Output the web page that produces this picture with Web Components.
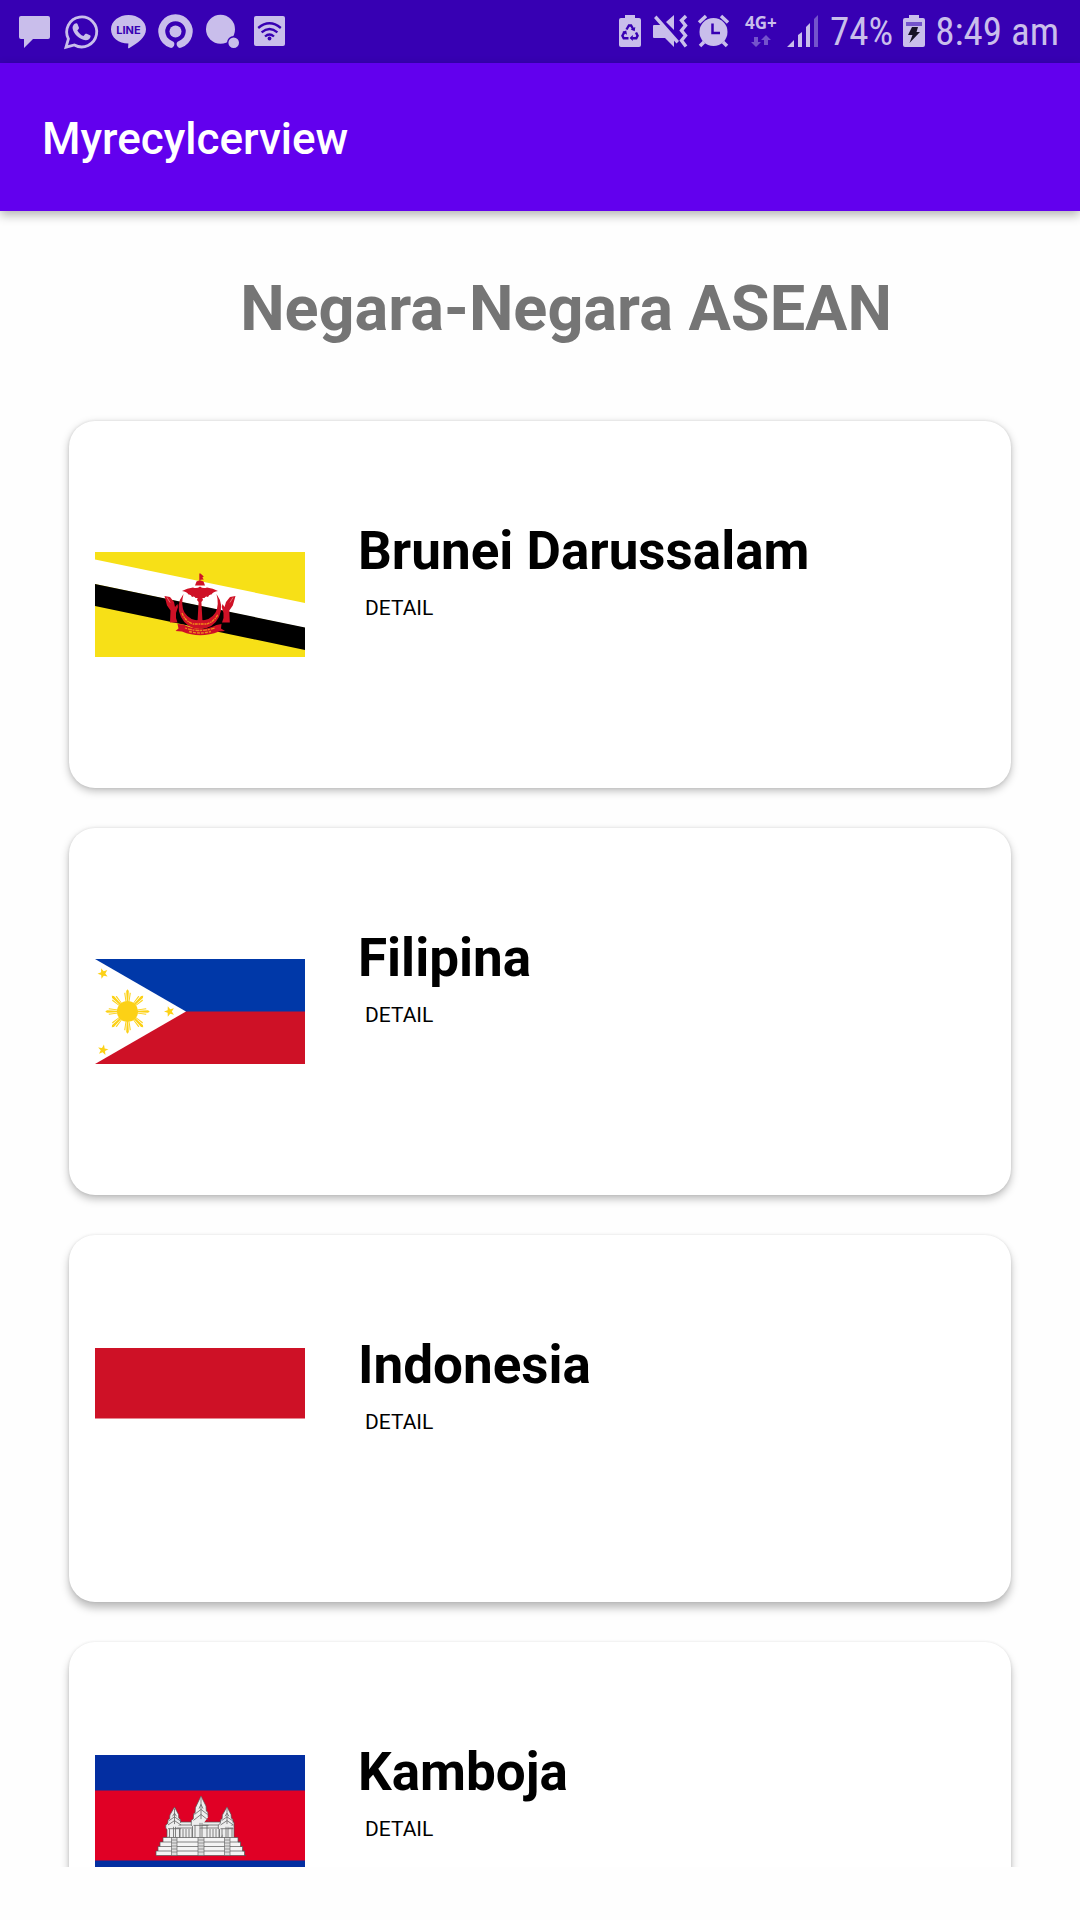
<!DOCTYPE html>
<html lang="id">
<head>
<meta charset="utf-8">
<meta name="viewport" content="width=device-width, initial-scale=1">
<title>Myrecylcerview</title>
<style>
  body { margin: 0; background: #fefefe; font-family: Roboto, "Noto Sans", sans-serif; }
</style>
</head>
<body>
<asean-app>
  <status-bar slot="status"></status-bar>
  <app-bar slot="bar">Myrecylcerview</app-bar>
  <country-list>
    <span slot="title">Negara-Negara ASEAN</span>
    <country-card flag="brunei" style="--drop: 3px">Brunei Darussalam</country-card>
    <country-card flag="filipina" style="--drop: 4px">Filipina</country-card>
    <country-card flag="indonesia" style="--drop: 6px">Indonesia</country-card>
    <country-card flag="kamboja" style="--drop: 7px">Kamboja</country-card>
  </country-list>
</asean-app>

<script>
const define = (name, html) => {
  const template = document.createElement('template');
  template.innerHTML = html;
  customElements.define(name, class extends HTMLElement {
    constructor() {
      super();
      this.attachShadow({ mode: 'open' }).append(template.content.cloneNode(true));
    }
  });
};

define('asean-app', `
<style>
  :host { display: flex; flex-direction: column; height: 100vh; }
</style>
<slot name="status"></slot>
<slot name="bar"></slot>
<slot></slot>`);

define('status-bar', `
<style>
  :host { display: block; flex: none; background: #3700b3; color: #c9beeb; }
  .bar { display: flex; justify-content: space-between; align-items: center; height: 62px; padding: 0 21px 1px 17px; }
  .group { display: flex; align-items: center; gap: 12px; }
  .system { gap: 10px; }
  svg { display: block; fill: currentColor; overflow: visible; }
  .text { padding-top: 2px; font: 39px/44px "Roboto Condensed", "Liberation Sans Narrow", Roboto, sans-serif; white-space: nowrap; }
  .net { font: bold 17px "Open Sans", sans-serif; }
  .line { font: bold 11px Inter, sans-serif; fill: #3700b3; }
  .dim { fill: #7453cc; }
</style>
<div class="bar">
  <div class="group">
    <svg width="35" height="35" viewBox="0 0 35 35"><path d="M4 2h27q2 0 2 2v19q0 2-2 2H16l-9 9v-9H4q-2 0-2-2V4q0-2 2-2z"/></svg>
    <svg width="35" height="35" viewBox="0 0 35 35"><path fill="none" stroke="currentColor" stroke-width="2.8" d="M2 33.2l2.4-8.4A15 15 0 1 1 10.4 31z"/><path d="M12.200 9.300c.6-.1 1 .1 1.300.8l1.400 3.300c.2.600.1 1-.3 1.500l-1.300 1.500c1.500 2.700 3.400 4.400 6.200 5.700l1.700-2c.5-.5.9-.6 1.500-.3l3.200 1.500c.7.300.8.700.7 1.300-.4 2.400-2.500 3.800-4.900 3.700-6.600-.7-12.400-6.700-13.100-12-.1-2.200 1.400-4.800 3.600-5z"/></svg>
    <svg width="35" height="35" viewBox="0 0 35 35"><path d="M17.500 1C27 1 35 7.200 35 15.200c0 8.300-8.500 14-17 19-.8.300-1-.3-.9-1l.3-3.600C7.500 29.600 0 23.500 0 15.200 0 7.200 8 1 17.500 1z"/><text class="line" x="17.500" y="20" text-anchor="middle">LINE</text></svg>
    <svg width="35" height="35" viewBox="0 0 35 35"><path fill="none" stroke="currentColor" stroke-width="7" stroke-linecap="round" d="M12.800 30.300A13.700 13.700 0 1 1 22.200 30.300"/><circle cx="17.500" cy="17.500" r="6"/></svg>
    <svg width="35" height="35" viewBox="0 0 35 35"><circle cx="15.500" cy="15.200" r="14.500"/><circle cx="28.700" cy="28.700" r="6" stroke="#3700b3" stroke-width="1.400"/></svg>
    <svg width="35" height="35" viewBox="0 0 35 35"><rect x="2" y="2" width="31" height="30" rx="2"/><g fill="none" stroke="#3700b3" stroke-width="2.300"><path d="M6.200 14Q17.500 4.500 28.800 14M9.600 18.400q7.900-6.800 15.800 0M13 22.500q4.500-4 9 0"/></g><circle cx="17.500" cy="24.500" r="1.900" fill="#3700b3"/></svg>
  </div>
  <div class="group system">
    <svg width="22" height="32" viewBox="0 0 22 32"><path d="M2 3h4V0h10v3h4q2 0 2 2v25q0 2-2 2H2q-2 0-2-2V5q0-2 2-2z"/><g fill="none" stroke="#3700b3" stroke-width="2.400"><path d="M7.500 14.500l2.400-4h2.200l2.300 4M17 17.500l1.600 3.200-1.300 2.600h-4M9.500 23.300H4.700l-1.300-2.600 2.300-4"/></g><path fill="#3700b3" d="M16.300 12l-.6 4.300-4-1.800zM13.800 20v6l-3.200-3zM3.200 17l4-1.500.8 4.200z"/></svg>
    <svg width="37" height="32" viewBox="-2 0 37 32"><path d="M1 10h7l13 13v9l-9-9H1q-1 0-1-1V11q0-1 1-1zM13 7l8-7v15zM1 3l2.500-2.500L26 26l-2.500 2.500z"/><path fill="none" stroke="currentColor" stroke-width="3.400" d="M33 1l-4.500 4.500 4 5-4 5 4 5-4 5 4.500 6"/></svg>
    <svg width="32" height="32" viewBox="0 0 32 32"><circle cx="15.500" cy="17" r="14"/><path fill="none" stroke="currentColor" stroke-width="3.500" d="M1 7.500L8 1M23 1l7 6.500M6 27l-4 4M25 27l4 4"/><path fill="none" stroke="#3700b3" stroke-width="2.500" d="M14.500 8.500V18H22"/></svg>
    <svg width="37" height="32" viewBox="0 0 37 32"><text class="net" x="5" y="14">4G+</text><path class="dim" d="M14 22h4v5h3l-5 5-5-5h3zM24 30h4v-5h3l-5-5-5 5h3z"/></svg>
    <svg width="33" height="32" viewBox="0 0 33 32"><path d="M0 32l7-7v7zM11 20l4-3v15h-4zM19 12l4-4v24h-4z"/><path class="dim" d="M27 4l4-4v32h-4z"/></svg>
    <span class="text">74%</span>
    <svg width="22" height="32" viewBox="0 0 22 32"><path d="M2 3h4V0h10v3h4q2 0 2 2v25q0 2-2 2H2q-2 0-2-2V5q0-2 2-2z"/><path class="dim" d="M3 7h16v4H3z"/><path fill="#171127" d="M9 12h6l-1.500 5H17L6.500 28l3-8H5z"/></svg>
    <span class="text">8:49 am</span>
  </div>
</div>`);

define('app-bar', `
<style>
  :host { display: block; flex: none; position: relative; z-index: 1; background: #6200ee; color: #fff; box-shadow: 0 4px 10px rgba(0,0,0,.3); }
  header { display: flex; align-items: center; height: 148px; padding: 3px 42px 0; box-sizing: border-box; }
  h1 { margin: 0; font-size: 44px; line-height: 56px; font-weight: 500; }
</style>
<header><h1><slot></slot></h1></header>`);

define('country-list', `
<style>
  :host { display: flex; flex-direction: column; flex: 1; min-height: 0; padding-bottom: 53px; }
  h2 { margin: 0; padding: 61px 0 0 52px; text-align: center; font-size: 63px; line-height: 74px; font-weight: 700; color: #757575; }
  .scroll { display: flex; flex-direction: column; gap: 40px; flex: 1; min-height: 0; margin-top: 45px; padding: 30px 69px 0; overflow-y: auto; scrollbar-width: none; }
</style>
<h2><slot name="title"></slot></h2>
<div class="scroll"><slot></slot></div>`);

define('country-card', `
<style>
  :host { display: block; flex: none; }
  article { display: flex; align-items: center; gap: 53px; height: 367px; box-sizing: border-box; padding: 0 26px; background: #fff; border-radius: 26px; box-shadow: 0 var(--drop, 4px) 9px rgba(0,0,0,.26), 0 0 3px rgba(0,0,0,.1); }
  flag-image { flex: none; width: 210px; }
  .info { display: flex; flex-direction: column; align-items: flex-start; align-self: flex-start; padding-top: 99px; }
  h3 { margin: 0; font-size: 53px; line-height: 62px; font-weight: 700; color: #000; }
  button { margin: 0; padding: 13px 7px; border: 0; background: none; font: 21px/26px Roboto, sans-serif; color: #000; }
</style>
<article>
  <flag-image></flag-image>
  <div class="info">
    <h3><slot></slot></h3>
    <button type="button">DETAIL</button>
  </div>
</article>`);

const star = (x, y, r, turn) => {
  const pts = [];
  for (let i = 0; i < 10; i++) {
    const a = (turn + i * 36) * Math.PI / 180, d = i % 2 ? r * 0.42 : r;
    pts.push((x + d * Math.sin(a)).toFixed(2) + ',' + (y - d * Math.cos(a)).toFixed(2));
  }
  return `<polygon points="${pts.join(' ')}"/>`;
};

const rays = Array.from({ length: 8 }, (_, i) =>
  `<path transform="rotate(${i * 45})" d="M-.8-10L-1.300-20.500 0-22.200 1.300-20.500.8-10zM-2-10L-3.300-18.500-2.200-19-1.200-10zM2-10L3.300-18.500 2.200-19 1.200-10z"/>`).join('');

// One tower of the temple, drawn around x = 0 with its foot at y = 0.
const tower = (x, y, h, w) => `
  <g transform="translate(${x} ${y})">
    <path fill="#eee" stroke="#555" stroke-width=".7" d="M${-w} 0V${-h * .28}l-1.200-1V${-h * .42}l2-1.500.3-${h * .12} 1.500-1 .3-${h * .12}L0 ${-h}L${w - 3.500} ${-h * .76}l.3 ${h * .12} 1.500 1 .3 ${h * .12}2 1.500V${-h * .28}L${w} ${-h * .26}V0z"/>
    <path fill="none" stroke="#666" stroke-width=".8" d="M${-w + 1} ${-h * .3}H${w - 1}M${-w + 1} ${-h * .42}L0 ${-h * .56}L${w - 1} ${-h * .42}M${-w + 2} ${-h * .56}L0 ${-h * .68}L${w - 2} ${-h * .56}M-2 ${-h * .7}L0 ${-h * .8}L2 ${-h * .7}M${-w + 2.500} 0V${-h * .3}M${w - 2.500} 0V${-h * .3}M-1 0V${-h * .36}M1 0V${-h * .36}M0 ${-h * .45}V${-h * .95}"/>
  </g>`;

const flags = {
  brunei: ['Bendera Brunei Darussalam', 105, `
    <rect width="210" height="105" fill="#f7e017"/>
    <path fill="#fff" d="M0 7.500L210 51v25L0 32z"/>
    <path d="M0 32l210 43.500V98L0 54z"/>
    <g fill="#cf1126">
      <path d="M104.300 21.500h1.200l3.300 3-1.500 1 1.500 2-3.300.2v2.300h-1.200zM101.500 29.500q3.500-2 7 0l1.500 4h-10z"/>
      <path d="M105 34.500Q108 37 112 35.500Q118 36 123 39Q118 39.500 116.500 42.500Q114 42 113 45Q110.500 43.500 109.500 46H100.500Q99.500 43.500 97 45Q96 42 93.500 42.500Q92 39.500 87 39Q92 36 98 35.500Q102 37 105 34.500z"/>
      <path d="M103 45h4l1 3-1.600 2 1 18 3 4h-10.800l3-4 1-18-1.600-2z"/>
      <path d="M88.500 42Q80 53 86 65q6 12 19 12t19-12q5.500-12-2.500-23 3 11-1 18.500-5 8-15.500 8t-15.500-8q-4-7.500-1-18.500z"/>
      <path d="M69.500 44l5.500 1 4 5 1 5 2.500-3 .5 3-2 6v5l1.500 4.500h-7.500l.5-12-3.500-5zM140.500 44l-5.500 1-4 5-1.500 5-2-3-.8 3 1.800 6v5l-1.500 4.500h7.800l-.5-12 3.500-5z"/>
      <path d="M80.500 79l3-2.500-1-4.500 6 .5Q105 81 121.500 73l5-1-.5 4.500 4 2.500-6 .5Q105 87 87 79.500z"/>
    </g>
    <g fill="none" stroke="#f08a1a" stroke-width="1.300">
      <path stroke-dasharray="3 .8 1.500 .6" d="M87 61q3 8 11 11h14q8-3 11-10"/>
      <path stroke-dasharray="2 1 4 .7" d="M90 76q15 5 30 0"/>
      <path stroke-dasharray="3 1" d="M94 79.500q11 3 22 0"/>
    </g>
    <path fill="none" stroke="#f5b3a8" stroke-width=".6" d="M72 45.500l3 5M138 45.500l-3 5"/>`],
  filipina: ['Bendera Filipina', 105, `
    <rect width="210" height="53" fill="#0038a8"/>
    <rect y="52.500" width="210" height="52.500" fill="#ce1126"/>
    <path fill="#fff" d="M0 0l91 52.500L0 105z"/>
    <g fill="#fcd116">
      <g transform="translate(32.500 52.500)"><circle r="10.600"/>${rays}</g>
      ${star(8, 14.500, 5.500, -20)}${star(8, 91, 5.500, 10)}${star(74.500, 52.500, 5.500, -90)}
    </g>`],
  indonesia: ['Bendera Indonesia', 141, `
    <rect width="210" height="141" fill="#fff"/>
    <rect width="210" height="70.500" fill="#ce1126"/>`],
  kamboja: ['Bendera Kamboja', 141, `
    <rect width="210" height="141" fill="#032ea1"/>
    <rect y="35.500" width="210" height="70" fill="#e00025"/>
    <path fill="#eee" stroke="#555" stroke-width=".7" d="M73 67h66v17H73z"/>
    <path fill="none" stroke="#666" stroke-width=".8" d="M74 70h64M74 73h64M85 74v9M88 74v9M91 74v9M94 74v9M97 74v9M115 74v9M118 74v9M121 74v9M124 74v9M127 74v9"/>
    ${tower(79.500, 83, 31, 7.500)}${tower(132, 83, 31, 7.500)}${tower(106, 83, 42, 8.500)}
    <path fill="#f4f4f4" stroke="#555" stroke-width=".7" d="M70 82.500h73v4.500h2.500v4.500h2v4.500h2v4.500h1.500v0H61v-4.500h2V91.500h2V87h3v-4.500z"/>
    <path fill="none" stroke="#555" stroke-width=".7" d="M68 87h77.500M65 91.500h82.500M63 96h86.500"/>
    <path fill="#ddd" stroke="#555" stroke-width=".6" d="M76.500 82.500h5.500v18h-5.500zM103 82.500h6v18h-6zM129.500 82.500h5.500v18h-5.500z"/>
    <path fill="none" stroke="#777" stroke-width=".7" d="M76.500 85h5.500m-5.500 3h5.500m-5.500 3h5.500m-5.500 3h5.500m-5.500 3h5.500M103 85h6m-6 3h6m-6 3h6m-6 3h6m-6 3h6M129.500 85h5.500m-5.500 3h5.500m-5.500 3h5.500m-5.500 3h5.500m-5.500 3h5.500"/>`]
};

customElements.define('flag-image', class extends HTMLElement {
  connectedCallback() {
    if (this.shadowRoot) return;
    const card = this.getRootNode().host;
    const [label, height, art] = flags[card.getAttribute('flag')];
    this.attachShadow({ mode: 'open' }).innerHTML = `
      <style>:host { display: block; } svg { display: block; width: 100%; height: auto; }</style>
      <svg viewBox="0 0 210 ${height}" role="img" aria-label="${label}">${art}</svg>`;
  }
});
</script>
</body>
</html>
